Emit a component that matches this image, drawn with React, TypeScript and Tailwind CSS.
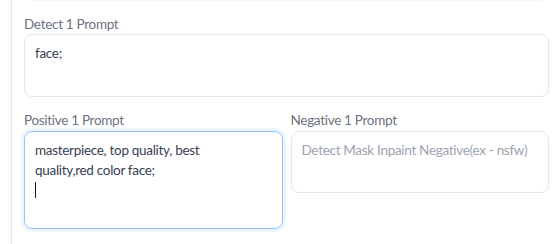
import React from 'react';

const Label = ({ children }: { children: React.ReactNode }) => (
  <span className="block h-[17px] text-[13.5px] leading-[17px] tracking-[-0.3px] text-[#6b7280]">{children}</span>
);

export default function App() {
  return (
    <div className="w-[556px] h-[244px] bg-white overflow-hidden font-['Lato',sans-serif]">
      <div className="ml-[11px] h-full border-l border-[#e5e7eb] pl-[12px] pr-[7px]">
        <div className="ml-[9px] mr-[8px] h-px bg-[#f5f5f6]" />
        <div className="pt-[15px]">
          <Label>Detect 1 Prompt</Label>
          <textarea
            readOnly
            defaultValue="face;"
            className="mt-[1px] block w-full h-[63px] resize-none rounded-[8px] border border-[#e5e7eb] px-[10px] pt-[8px] pb-[9px] text-[13.5px] leading-[20px] tracking-[-0.3px] text-[#374151] shadow-[inset_0_1px_2px_rgba(0,0,0,0.03)] outline-none"
          />
        </div>
        <div className="mt-[15px] grid grid-cols-2 gap-[8px]">
          <div>
            <Label>Positive 1 Prompt</Label>
            <div className="mt-[2px] h-[98px] rounded-[8px] border border-[#93c5fd] px-[10px] pt-[8px] pb-[9px] text-[13.5px] leading-[20px] tracking-[-0.3px] text-[#374151] shadow-[0_0_0_3px_#eff6ff]">
              <div>masterpiece, top quality, best</div>
              <div>quality,red color face;</div>
              <div className="h-[20px] flex items-center">
                <span className="block w-px h-[16px] bg-[#111827]" />
              </div>
            </div>
          </div>
          <div>
            <Label>Negative 1 Prompt</Label>
            <textarea
              readOnly
              placeholder="Detect Mask Inpaint Negative(ex - nsfw)"
              className="mt-[2px] block w-full h-[62px] resize-none rounded-[8px] border border-[#e5e7eb] px-[10px] pt-[8px] pb-[9px] text-[13.5px] leading-[20px] tracking-[-0.3px] text-[#374151] placeholder:text-[#9ca3af] shadow-[inset_0_1px_2px_rgba(0,0,0,0.03)] outline-none"
            />
          </div>
        </div>
      </div>
    </div>
  );
}
